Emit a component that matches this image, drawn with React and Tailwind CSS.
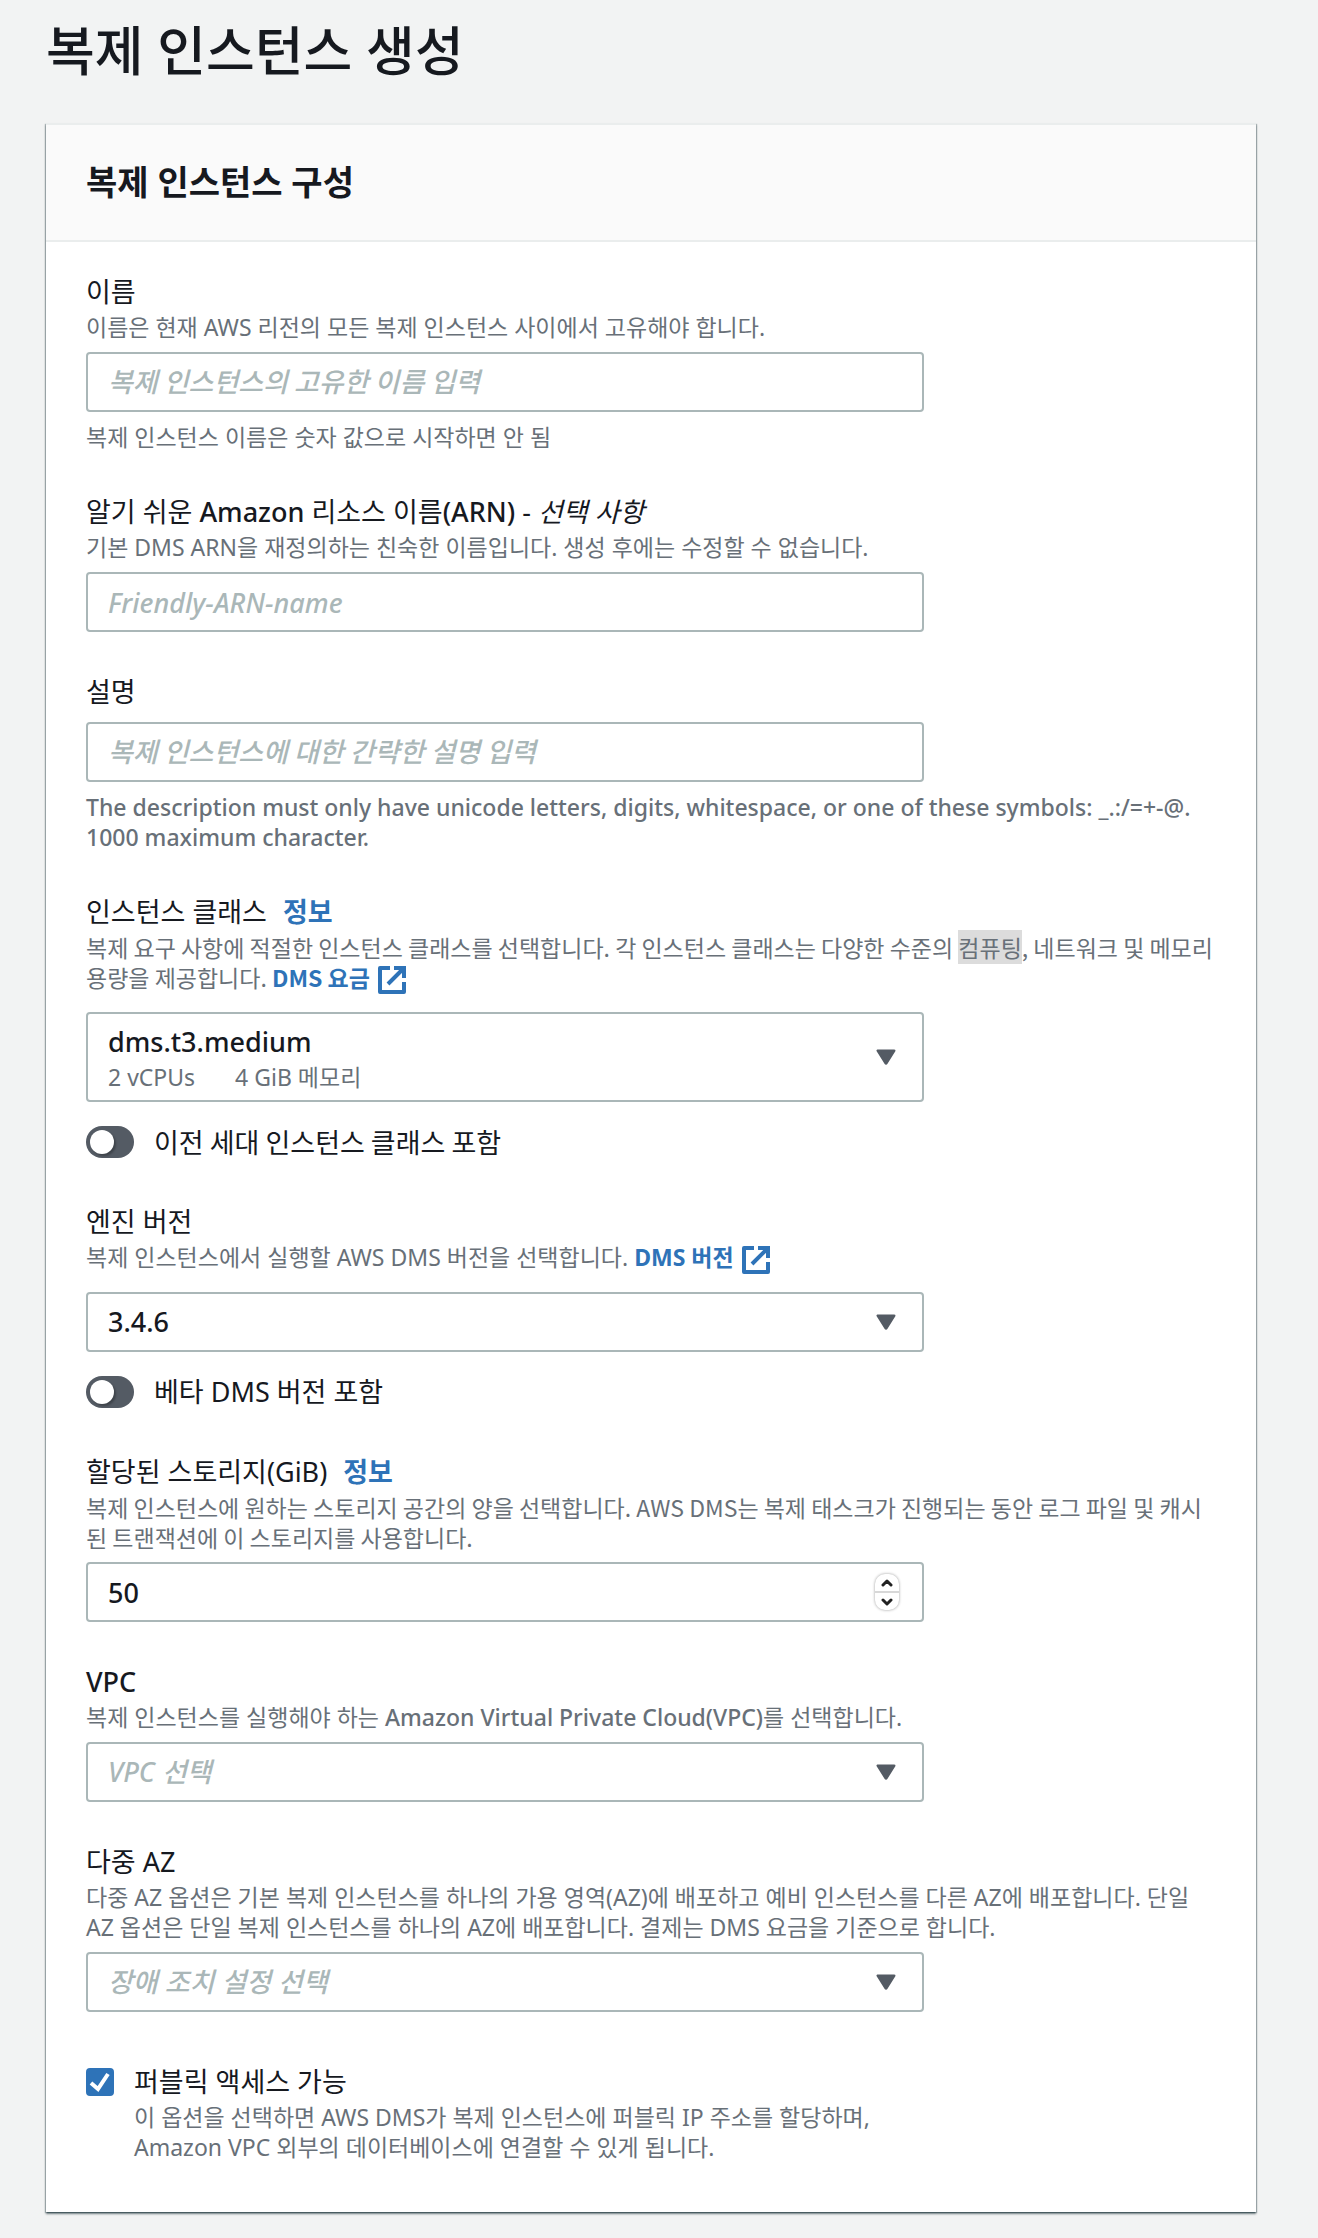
import { useState } from 'react'

const initial = {
  name: '', arn: '', description: '', instanceClass: 'dms.t3.medium', oldClasses: false,
  engine: '3.4.6', beta: false, storage: 50, vpc: '', multiAz: '', isPublic: true
}

const control = 'block w-full rounded border-2 border-[#aab7b8] bg-white px-5 text-[27px] font-medium text-[#16191f] outline-none focus:border-[#00a1c9]'
const placeholder = 'placeholder:italic placeholder:text-[#aab7b8] placeholder:opacity-100'
const hangul = "font-['Noto_Sans_CJK_KR',sans-serif]"

function ExternalLink({ children }) {
  return (
    <a href="#" className="font-bold text-[#2e73b8] hover:underline">
      {children}
      <span className="ml-2 inline-flex h-[40px] items-start pt-1 align-top">
        <svg width="28" height="28" viewBox="0 0 28 28" fill="none" stroke="currentColor" strokeWidth="4" aria-hidden="true">
          <path d="M12 2H2v24h24V16" strokeLinejoin="round" />
          <path d="M16 2h10v10M25 3L10 18" />
        </svg>
      </span>
    </a>
  )
}

function Field({ id, label, extra, info, description, descriptionFont = '', hint, children }) {
  return (
    <div>
      <div className="flex gap-4 text-[27px] leading-[36px]">
        <label htmlFor={id}>{label}{extra && <i>{extra}</i>}</label>
        {info && <a href="#" className="font-bold text-[#2e73b8] hover:underline">정보</a>}
      </div>
      {description && <p className={`mt-0.5 text-[23px] leading-[30px] text-[#687078] ${descriptionFont}`}>{description}</p>}
      <div className={description ? 'mt-2.5 max-w-[838px]' : 'mt-3 max-w-[838px]'}>{children}</div>
      {hint && <p className="mt-2.5 text-[23px] leading-[30px] text-[#687078]">{hint}</p>}
    </div>
  )
}

function Select({ id, value, onChange, options, empty, detail }) {
  return (
    <div className="relative">
      <select
        id={id}
        value={value}
        onChange={e => onChange(e.target.value)}
        className={`${control} appearance-none ${detail ? 'h-[90px] pb-[30px]' : 'h-[60px]'} ${value ? '' : 'italic text-[#aab7b8]'}`}
      >
        {empty && <option value="">{empty}</option>}
        {options.map(o => <option key={o} value={o}>{o}</option>)}
      </select>
      {detail && (
        <div className="pointer-events-none absolute bottom-2.5 left-[22px] flex gap-10 text-[23px] leading-[30px] text-[#687078]">
          {detail.map(d => <span key={d}>{d}</span>)}
        </div>
      )}
      <svg className="pointer-events-none absolute inset-y-0 right-7 my-auto" width="20" height="20" viewBox="0 0 20 20" aria-hidden="true">
        <path d="M2 2h16l-8 16z" fill="#545b64" stroke="#545b64" strokeWidth="3" strokeLinejoin="round" transform="translate(0 2) scale(1 0.8)" />
      </svg>
    </div>
  )
}

function Toggle({ checked, onChange, children }) {
  return (
    <label className="mt-5 flex h-[40px] items-center gap-5 text-[27px]">
      <input type="checkbox" role="switch" checked={checked} onChange={e => onChange(e.target.checked)} className="peer sr-only" />
      <span className="flex h-8 w-12 items-center rounded-full bg-[#545b64] px-1 peer-checked:justify-end peer-checked:bg-[#2e73b8]">
        <span className="h-6 w-6 rounded-full bg-white shadow-[2px_2px_2px_rgba(0,0,0,0.25)]" />
      </span>
      {children}
    </label>
  )
}

export default function App() {
  const [form, setForm] = useState(initial)
  const update = (k, v) => setForm(prev => ({ ...prev, [k]: v }))

  return (
    <main className="min-h-screen bg-[#f2f3f3] pt-4 pr-[62px] pb-[25px] pl-[46px] font-['Noto_Sans','Noto_Sans_CJK_KR',sans-serif] text-[#16191f]">
      <h1 className="text-[53px] leading-[70px] font-medium">복제 인스턴스 생성</h1>
      <section className="mt-[37px] bg-white shadow-[0_2px_2px_rgba(0,28,36,0.5),1px_1px_1px_rgba(0,28,36,0.25),-1px_1px_1px_rgba(0,28,36,0.25)]">
        <header className="border-y-2 border-[#eaeded] bg-[#fafafa] px-10 py-8">
          <h2 className="text-[34px] leading-[51px] font-bold">복제 인스턴스 구성</h2>
        </header>
        <form className="flex flex-col gap-[42px] px-10 pt-8 pb-[50px]" onSubmit={e => e.preventDefault()}>
          <Field
            id="name"
            label="이름"
            description="이름은 현재 AWS 리전의 모든 복제 인스턴스 사이에서 고유해야 합니다."
            hint="복제 인스턴스 이름은 숫자 값으로 시작하면 안 됨"
          >
            <input id="name" className={`${control} ${placeholder} ${hangul} h-[60px] pb-1`} value={form.name} onChange={e => update('name', e.target.value)} placeholder="복제 인스턴스의 고유한 이름 입력" />
          </Field>

          <Field
            id="arn"
            label={<>알기 쉬운 <span className="font-medium">Amazon</span> 리소스 이름<span className="font-medium">(ARN)</span> - </>}
            extra="선택 사항"
            description="기본 DMS ARN을 재정의하는 친숙한 이름입니다. 생성 후에는 수정할 수 없습니다."
          >
            <input id="arn" className={`${control} ${placeholder} h-[60px]`} value={form.arn} onChange={e => update('arn', e.target.value)} placeholder="Friendly-ARN-name" />
          </Field>

          <Field
            id="description"
            label="설명"
            hint={<span className="font-medium">The description must only have unicode letters, digits, whitespace, or one of these symbols: _.:/=+-@. 1000 maximum character.</span>}
          >
            <input id="description" className={`${control} ${placeholder} ${hangul} h-[60px] pb-1`} value={form.description} onChange={e => update('description', e.target.value)} placeholder="복제 인스턴스에 대한 간략한 설명 입력" />
          </Field>

          <div>
            <Field
              id="instanceClass"
              label="인스턴스 클래스"
              info
              descriptionFont={hangul}
              description={<>
                복제 요구 사항에 적절한 인스턴스 클래스를 선택합니다. 각 인스턴스 클래스는 다양한 수준의 <mark className="bg-[#dcdcdc] text-inherit">컴퓨팅</mark>, 네트워크 및 메모리 용량을 제공합니다. <ExternalLink>DMS 요금</ExternalLink>
              </>}
            >
              <Select id="instanceClass" value={form.instanceClass} onChange={v => update('instanceClass', v)} options={['dms.t3.medium']} detail={['2 vCPUs', '4 GiB 메모리']} />
            </Field>
            <Toggle checked={form.oldClasses} onChange={v => update('oldClasses', v)}>
              <span className={hangul}>이전 세대 인스턴스 클래스 포함</span>
            </Toggle>
          </div>

          <div>
            <Field
              id="engine"
              label="엔진 버전"
              description={<>복제 인스턴스에서 실행할 AWS DMS 버전을 선택합니다. <ExternalLink>DMS 버전</ExternalLink></>}
            >
              <Select id="engine" value={form.engine} onChange={v => update('engine', v)} options={['3.4.6']} />
            </Field>
            <Toggle checked={form.beta} onChange={v => update('beta', v)}>베타 DMS 버전 포함</Toggle>
          </div>

          <Field
            id="storage"
            label="할당된 스토리지(GiB)"
            info
            descriptionFont={hangul}
            description="복제 인스턴스에 원하는 스토리지 공간의 양을 선택합니다. AWS DMS는 복제 태스크가 진행되는 동안 로그 파일 및 캐시된 트랜잭션에 이 스토리지를 사용합니다."
          >
            <div className="relative">
              <input id="storage" type="number" className={`${control} h-[60px] [appearance:textfield] [&::-webkit-inner-spin-button]:appearance-none`} value={form.storage} onChange={e => update('storage', Number(e.target.value))} />
              <div className="absolute inset-y-0 right-[25px] my-auto flex h-9 w-6 flex-col divide-y-2 divide-[#d8d8d8] overflow-hidden rounded-[10px] bg-white shadow-[0_0_3px_rgba(0,0,0,0.4)]">
                <button type="button" aria-label="증가" className="flex flex-1 items-center justify-center" onClick={() => update('storage', form.storage + 1)}>
                  <svg width="12" height="8" viewBox="0 0 12 8" fill="none" stroke="#222" strokeWidth="3" strokeLinecap="round" strokeLinejoin="round"><path d="M2 6l4-4 4 4" /></svg>
                </button>
                <button type="button" aria-label="감소" className="flex flex-1 items-center justify-center" onClick={() => update('storage', form.storage - 1)}>
                  <svg width="12" height="8" viewBox="0 0 12 8" fill="none" stroke="#222" strokeWidth="3" strokeLinecap="round" strokeLinejoin="round"><path d="M2 2l4 4 4-4" /></svg>
                </button>
              </div>
            </div>
          </Field>

          <Field
            id="vpc"
            label={<span className="font-medium">VPC</span>}
            description={<>복제 인스턴스를 실행해야 하는 <span className="font-medium">Amazon Virtual Private Cloud(VPC)</span>를 선택합니다.</>}
          >
            <Select id="vpc" value={form.vpc} onChange={v => update('vpc', v)} options={[]} empty="VPC 선택" />
          </Field>

          <Field
            id="multiAz"
            label="다중 AZ"
            description="다중 AZ 옵션은 기본 복제 인스턴스를 하나의 가용 영역(AZ)에 배포하고 예비 인스턴스를 다른 AZ에 배포합니다. 단일 AZ 옵션은 단일 복제 인스턴스를 하나의 AZ에 배포합니다. 결제는 DMS 요금을 기준으로 합니다."
          >
            <Select id="multiAz" value={form.multiAz} onChange={v => update('multiAz', v)} options={[]} empty="장애 조치 설정 선택" />
          </Field>

          <div className="flex max-w-[838px] gap-5 pt-2.5">
            <div className="relative mt-1 h-7 w-7 shrink-0">
              <input id="public" type="checkbox" aria-describedby="public-help" checked={form.isPublic} onChange={e => update('isPublic', e.target.checked)} className="peer block h-7 w-7 appearance-none rounded border-2 border-[#aab7b8] bg-white checked:border-[#2e73b8] checked:bg-[#2e73b8]" />
              <svg className="pointer-events-none absolute inset-0 hidden peer-checked:block" width="28" height="28" viewBox="0 0 28 28" fill="none" stroke="#fff" strokeWidth="4" aria-hidden="true">
                <path d="M5 15l7 6L22 6" />
              </svg>
            </div>
            <div>
              <label htmlFor="public" className="block text-[27px] leading-[36px]">퍼블릭 액세스 가능</label>
              <p id="public-help" className="mt-0.5 text-[23px] leading-[30px] text-[#687078]">
                이 옵션을 선택하면 AWS DMS가 복제 인스턴스에 퍼블릭 IP 주소를 할당하며, Amazon VPC 외부의 데이터베이스에 연결할 수 있게 됩니다.
              </p>
            </div>
          </div>
        </form>
      </section>
    </main>
  )
}
